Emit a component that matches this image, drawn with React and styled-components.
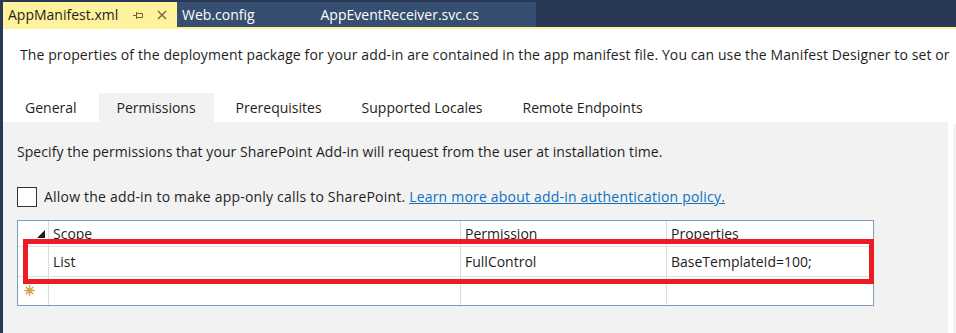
import styled, { createGlobalStyle } from 'styled-components'

const GlobalStyle = createGlobalStyle`
  html, body {
    margin: 0;
    padding: 0;
    background: #fff;
  }
  body {
    font-family: "Open Sans", "Noto Sans", sans-serif;
    color: #1e1e1e;
  }
`

const columns = [
  { key: 'scope', label: 'Scope' },
  { key: 'permission', label: 'Permission' },
  { key: 'properties', label: 'Properties' },
]

const rows = [
  { scope: 'List', permission: 'FullControl', properties: 'BaseTemplateId=100;' },
]

const PinIcon = () => (
  <svg width="10" height="8" viewBox="0 0 10 8">
    <path d="M0 4.5H3M3.5 1V8M3.5 2.5H9.5V6.5H3.5" fill="none" stroke="#6e6236" strokeWidth="1" />
  </svg>
)

const CloseIcon = () => (
  <svg width="10" height="10" viewBox="0 0 10 10">
    <path d="M1 1L9 9M9 1L1 9" stroke="#716544" strokeWidth="1.4" />
  </svg>
)

const SortGlyph = () => (
  <svg width="8" height="8" viewBox="0 0 8 8">
    <polygon points="8,0 8,8 0,8" fill="#1e1e1e" />
  </svg>
)

const NewRowStar = () => (
  <svg width="11" height="11" viewBox="0 0 11 11">
    <g stroke="#d9a24f" strokeWidth="1.5" strokeLinecap="round">
      <path d="M5.5 0.8V10.2M0.8 5.5H10.2M2.2 2.2L8.8 8.8M8.8 2.2L2.2 8.8" />
    </g>
  </svg>
)

const App = () => {
  return (
    <>
      <GlobalStyle />
      <Page>
        <TopBar>
          <DocTab $active>
            <span>AppManifest.xml</span>
            <TabIcons>
              <PinIcon />
              <CloseIcon />
            </TabIcons>
          </DocTab>
          <DocTab $width="138px">Web.config</DocTab>
          <DocTab $width="221px" $pad="6px">AppEventReceiver.svc.cs</DocTab>
        </TopBar>
        <Body>
          <Main>
            <Description>
              The properties of the deployment package for your add-in are contained in the app manifest file. You can use the Manifest Designer to set or
            </Description>
            <TabStrip>
              {['General', 'Permissions', 'Prerequisites', 'Supported Locales', 'Remote Endpoints'].map((t) => (
                <Tab key={t} $active={t === 'Permissions'}>{t}</Tab>
              ))}
            </TabStrip>
            <Content>
              <Hint>Specify the permissions that your SharePoint Add-in will request from the user at installation time.</Hint>
              <CheckRow>
                <CheckBox />
                <span>
                  Allow the add-in to make app-only calls to SharePoint.{' '}
                  <Link>Learn more about add-in authentication policy.</Link>
                </span>
              </CheckRow>
              <Grid>
                <HeadCell $first $align="flex-end">
                  <SortGlyph />
                </HeadCell>
                {columns.map((c, i) => (
                  <HeadCell key={c.key} $last={i === columns.length - 1}>{c.label}</HeadCell>
                ))}
                {rows.map((r, ri) => (
                  <RowFragment key={ri} row={r} />
                ))}
                <Cell $first $h="28px" $noBottom>
                  <NewRowStar />
                </Cell>
                <Cell $h="28px" $noBottom />
                <Cell $h="28px" $noBottom />
                <Cell $h="28px" $noBottom $last />
                <Highlight />
              </Grid>
            </Content>
          </Main>
          <Gutter>
            <GutterStrip />
          </Gutter>
        </Body>
      </Page>
    </>
  )
}

const RowFragment = ({ row }) => (
  <>
    <Cell $first $h="30px" />
    {columns.map((c, i) => (
      <Cell key={c.key} $h="30px" $last={i === columns.length - 1}>{row[c.key]}</Cell>
    ))}
  </>
)

const Page = styled.div`
  width: 956px;
  height: 333px;
  overflow: hidden;
  display: flex;
  flex-direction: column;
  background: #293955;
`

const TopBar = styled.div`
  height: 27px;
  box-sizing: border-box;
  padding: 2px 0 0 3px;
  display: flex;
`

const DocTab = styled.div`
  height: 25px;
  box-sizing: border-box;
  width: ${(p) => p.$width || '174px'};
  padding-left: ${(p) => p.$pad || '5px'};
  display: flex;
  align-items: center;
  font-size: 14px;
  white-space: nowrap;
  background: ${(p) => (p.$active ? '#fff29d' : '#364e6f')};
  color: ${(p) => (p.$active ? '#1e1e1e' : '#ffffff')};
  justify-content: ${(p) => (p.$pad ? 'flex-end' : 'flex-start')};
  padding-right: ${(p) => (p.$pad ? '57px' : '0')};
`

const TabIcons = styled.div`
  display: flex;
  align-items: center;
  gap: 14px;
  margin-left: 15px;
`

const Body = styled.div`
  flex: 1;
  display: flex;
  margin-left: 3px;
  background: #fff;
  border-top: 2px solid #fff29d;
  min-height: 0;
`

const Main = styled.div`
  flex: 1;
  min-width: 0;
  display: flex;
  flex-direction: column;
`

const Description = styled.div`
  padding: 16px 0 0 17px;
  line-height: 20px;
  font-size: 14px;
  letter-spacing: 0.1px;
  white-space: nowrap;
`

const TabStrip = styled.div`
  margin-top: 28px;
  height: 29px;
  display: flex;
  padding-left: 2px;
`

const Tab = styled.div`
  display: flex;
  align-items: center;
  padding: 0 18px;
  margin: 0 2px;
  font-size: 14px;
  background: ${(p) => (p.$active ? '#f2f2f2' : 'transparent')};
`

const Content = styled.div`
  flex: 1;
  background: #f2f2f2;
  padding-left: 14px;
`

const Hint = styled.div`
  margin-top: 20px;
  line-height: 20px;
  font-size: 14px;
  letter-spacing: 0.06px;
`

const CheckRow = styled.div`
  margin-top: 25px;
  display: flex;
  align-items: center;
  gap: 7px;
  font-size: 14px;
  line-height: 20px;
  letter-spacing: 0.2px;
`

const CheckBox = styled.div`
  width: 20px;
  height: 20px;
  box-sizing: border-box;
  border: 1px solid #333;
  background: #fff;
`

const Link = styled.span`
  color: #0e70c0;
  text-decoration: underline;
`

const Grid = styled.div`
  position: relative;
  margin-top: 13px;
  width: 857px;
  box-sizing: border-box;
  border: 1px solid #7f9db9;
  background: #fff;
  display: grid;
  grid-template-columns: 31px 412px 206px 206px;
  font-size: 14px;
`

const HeadCell = styled.div`
  height: 26px;
  box-sizing: border-box;
  display: flex;
  align-items: center;
  justify-content: ${(p) => p.$align || 'flex-start'};
  padding: ${(p) => (p.$first ? '0 3px 0 0' : '0 0 0 4px')};
  border-right: ${(p) => (p.$last ? 'none' : '1px solid #dcdcdc')};
  border-bottom: 1px solid #e4e4e4;
`

const Cell = styled.div`
  height: ${(p) => p.$h};
  box-sizing: border-box;
  display: flex;
  align-items: ${(p) => (p.$first ? 'flex-start' : 'center')};
  padding: ${(p) => (p.$first ? '8px 0 0 6px' : '0 0 0 4px')};
  border-right: ${(p) => (p.$last ? 'none' : '1px solid #dcdcdc')};
  border-bottom: ${(p) => (p.$noBottom ? 'none' : '1px solid #e4e4e4')};
`

const Highlight = styled.div`
  position: absolute;
  left: 5px;
  top: 18px;
  width: 851px;
  height: 45px;
  box-sizing: border-box;
  border: 5px solid #ed1c24;
  pointer-events: none;
`

const Gutter = styled.div`
  width: 8px;
  display: flex;
  padding: 95px 0 0 5px;
  box-sizing: border-box;
`

const GutterStrip = styled.div`
  flex: 1;
  background: #f3f3f3;
`

export default App
